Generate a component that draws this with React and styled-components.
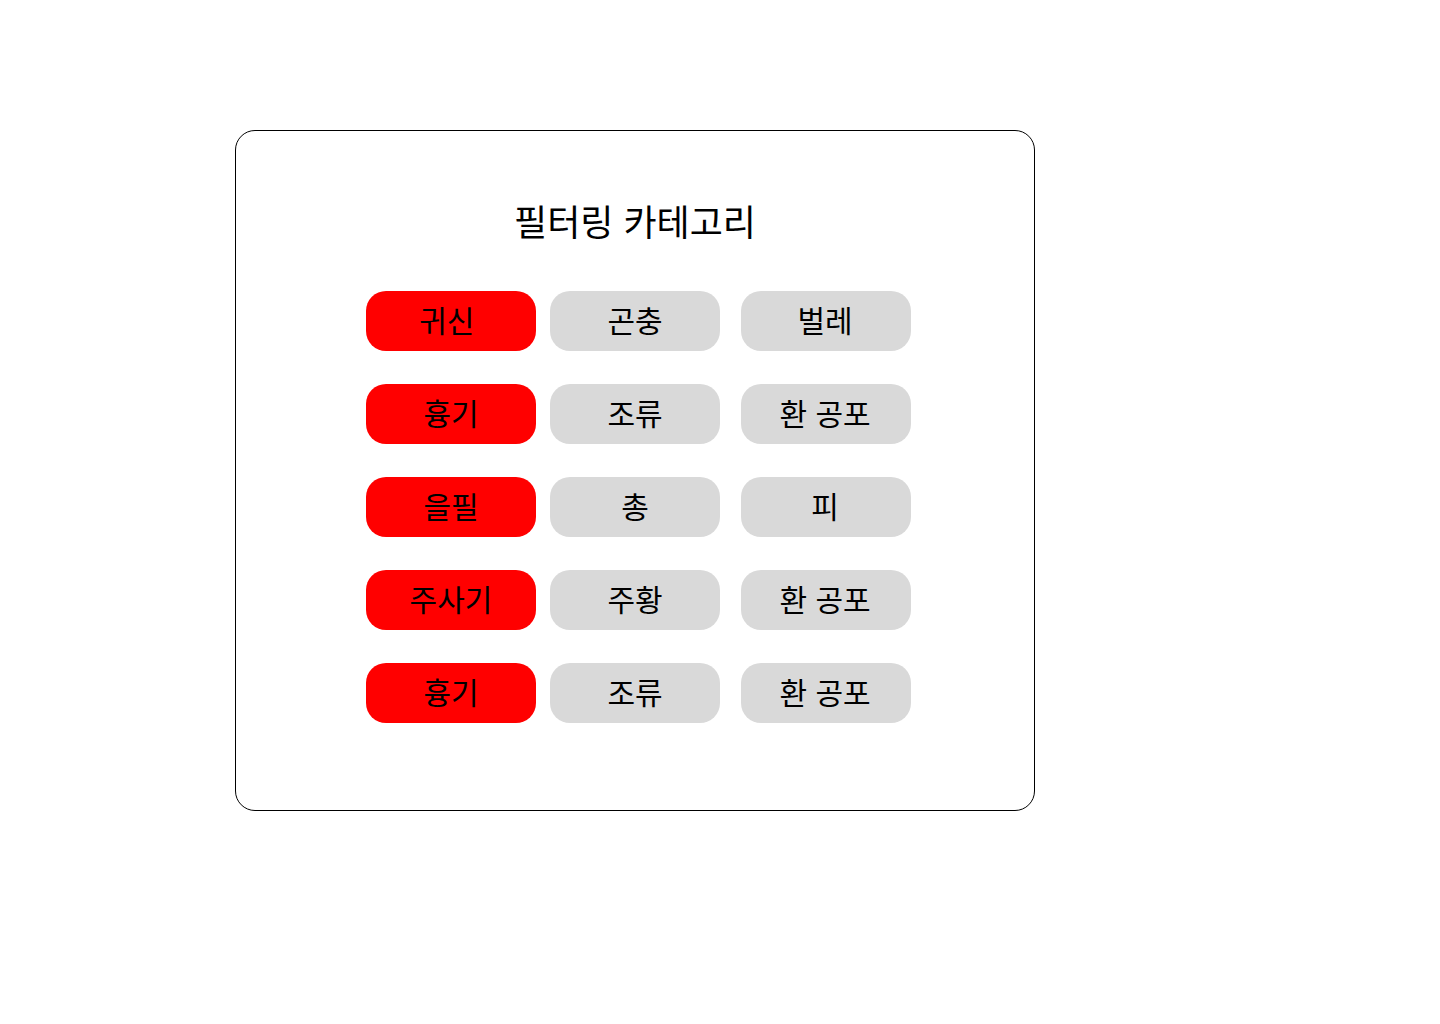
import React, { useState } from "react";
import styled, { createGlobalStyle } from "styled-components";

const GlobalStyle = createGlobalStyle`
  * { box-sizing: border-box; }
  body {
    margin: 0;
    background: #fff;
    color: #000;
    font-family: Inter, "Noto Sans CJK KR", sans-serif;
  }
`;

const Page = styled.main`
  padding: 130px 405px 130px 235px;
`;

const Panel = styled.section`
  display: flex;
  flex-direction: column;
  align-items: center;
  gap: 45px;
  padding: 70px 24px 87px;
  border: 1px solid #000;
  border-radius: 20px;
`;

const Title = styled.h1`
  margin: 0;
  font-size: 36px;
  font-weight: 400;
  line-height: 45px;
  white-space: nowrap;
`;

const Columns = styled.div`
  display: flex;
  margin-left: 7px;
`;

const Column = styled.div`
  display: flex;
  flex-direction: column;
  gap: 33px;
  margin-left: ${({ $gap }) => $gap}px;
`;

const Chip = styled.button`
  width: 170px;
  height: 60px;
  padding: 0 ${({ $inset }) => $inset}px 0 0;
  border: 0;
  border-radius: 20px;
  background: ${({ $active }) => ($active ? "#ff0000" : "#d9d9d9")};
  color: #000;
  font: inherit;
  font-size: 30px;
  line-height: 36px;
  white-space: pre;
  cursor: pointer;
`;

const columns = [
  { gap: 0, active: true, inset: 0, labels: ["귀신 ", "흉기", "을필", "주사기", "흉기"] },
  { gap: 14, active: false, inset: 0, labels: ["곤충", "조류", "총", "주황", "조류"] },
  { gap: 21, active: false, inset: 2, labels: ["벌레", "환 공포", "피", "환 공포", "환 공포"] },
];

export default function App() {
  const [selected, setSelected] = useState(() =>
    columns.map((column) => column.labels.map(() => column.active))
  );

  const toggle = (c, r) =>
    setSelected((state) =>
      state.map((col, i) => col.map((on, j) => (i === c && j === r ? !on : on)))
    );

  return (
    <>
      <GlobalStyle />
      <Page>
        <Panel>
          <Title>필터링 카테고리</Title>
          <Columns>
            {columns.map((column, c) => (
              <Column key={c} $gap={column.gap}>
                {column.labels.map((label, r) => (
                  <Chip
                    key={r}
                    type="button"
                    aria-pressed={selected[c][r]}
                    $active={selected[c][r]}
                    $inset={column.inset}
                    onClick={() => toggle(c, r)}
                  >
                    {label}
                  </Chip>
                ))}
              </Column>
            ))}
          </Columns>
        </Panel>
      </Page>
    </>
  );
}
